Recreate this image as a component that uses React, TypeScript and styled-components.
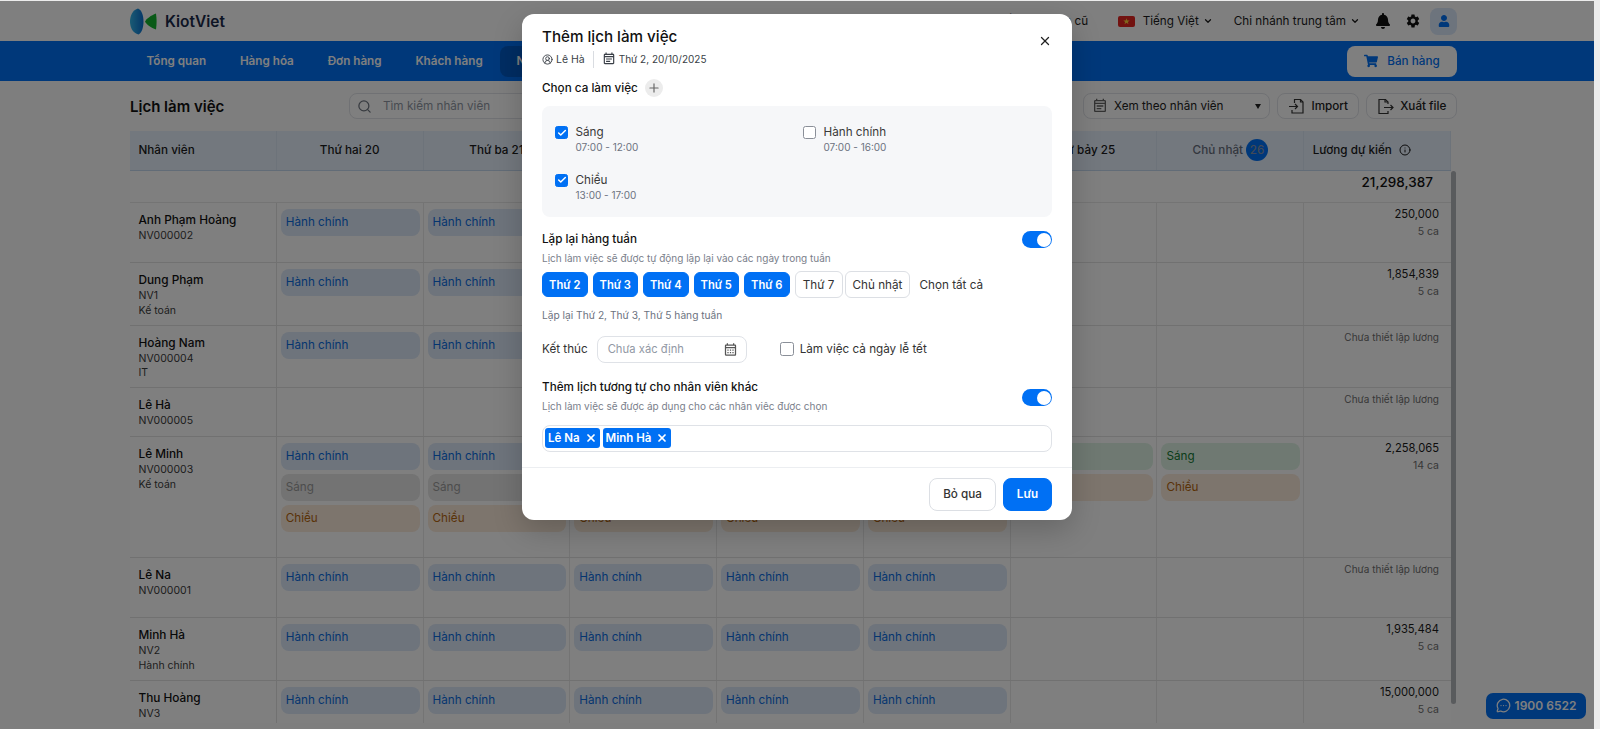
import React from "react";
import styled, { createGlobalStyle } from "styled-components";
import { Search, Info, MessageCircleMore, CircleUserRound, Plus, X, ChevronDown, Check } from "lucide-react";
import { FaBell, FaUser, FaShoppingCart } from "react-icons/fa";
import { MdSettings, MdOutlineEventNote, MdOutlineCalendarMonth } from "react-icons/md";

const Global = createGlobalStyle`
  html, body { margin: 0; padding: 0; height: 729px; overflow: hidden; background: #ececec; }
  body, button, input { font-family: Inter, "Noto Sans", sans-serif; }
  * { box-sizing: border-box; }
`;

const Viewport = styled.div`
  width: 1594px;
  height: 728px;
  margin-top: 1px;
  background: #fff;
  position: relative;
  overflow: hidden;
  display: flex;
  flex-direction: column;
`;

const TopBar = styled.header`
  height: 40px;
  flex: none;
  display: flex;
  align-items: center;
  padding: 0 137px 0 130px;
  background: #fff;
`;
const Brand = styled.div`
  display: flex;
  align-items: center;
  gap: 8px;
  font-size: 15.5px;
  font-weight: 600;
  color: #1b2a4a;
`;
const TopActions = styled.div`
  margin-left: auto;
  display: flex;
  align-items: center;
  font-size: 11.7px;
  color: #1c1c1c;
`;
const TopLink = styled.span<{ $mr: number }>`
  display: inline-flex;
  align-items: center;
  gap: 4px;
  margin-right: ${(p) => p.$mr}px;
  white-space: nowrap;
`;
const FlagSlot = styled.span`
  display: inline-flex;
  margin-right: 3.5px;
`;
const IconSlot = styled.span<{ $mr?: number }>`
  display: inline-flex;
  margin-right: ${(p) => p.$mr ?? 0}px;
  color: #111;
`;
const UserButton = styled.span`
  width: 27px;
  height: 27px;
  border-radius: 8px;
  background: #dbe8fa;
  color: #0070f4;
  display: inline-flex;
  align-items: center;
  justify-content: center;
`;

const NavBar = styled.nav`
  height: 40px;
  flex: none;
  display: flex;
  align-items: center;
  padding: 0 137px 0 129.6px;
  background: #0070f4;
`;
const NavItem = styled.span<{ $active?: boolean }>`
  height: 31px;
  display: inline-flex;
  align-items: center;
  padding: 0 16.9px;
  border-radius: 8px;
  font-size: 11.7px;
  font-weight: 600;
  color: #fff;
  background: ${(p) => (p.$active ? "#005bc7" : "transparent")};
`;
const SellButton = styled.span`
  margin-left: auto;
  width: 110px;
  height: 31px;
  border-radius: 8px;
  background: #fff;
  color: #0070f4;
  display: inline-flex;
  align-items: center;
  justify-content: center;
  gap: 9px;
  font-size: 11.7px;
  font-weight: 500;
`;

const Content = styled.main`
  flex: 1;
  min-height: 0;
  display: flex;
  flex-direction: column;
  padding: 12px 137px 0 130px;
  background: #fcfcfc;
`;
const TitleRow = styled.div`
  height: 26px;
  flex: none;
  display: flex;
  align-items: center;
  margin-bottom: 12px;
`;
const PageTitle = styled.h1`
  margin: 0;
  width: 219px;
  font-size: 15px;
  font-weight: 600;
  color: #111;
`;
const SearchBox = styled.div`
  width: 320px;
  height: 26px;
  border: 1px solid #e1e3e8;
  border-radius: 8px;
  background: #fff;
  display: flex;
  align-items: center;
  gap: 11px;
  padding: 0 7px;
  font-size: 11.7px;
  color: #9097a3;
`;
const ToolButton = styled.span<{ $w: number }>`
  width: ${(p) => p.$w}px;
  height: 26px;
  border: 1px solid #e1e3e8;
  border-radius: 8px;
  background: #fff;
  display: inline-flex;
  align-items: center;
  justify-content: center;
  gap: 6.5px;
  font-size: 11.7px;
  font-weight: 500;
  color: #222;
  margin-left: 7px;
`;
const ViewSelect = styled(ToolButton)`
  margin-left: auto;
  justify-content: flex-start;
  padding: 0 8px;
  font-weight: 400;
  color: #222;
  gap: 6px;
`;
const Caret = styled.span`
  margin-left: auto;
  width: 0;
  height: 0;
  border-left: 3.5px solid transparent;
  border-right: 3.5px solid transparent;
  border-top: 5px solid #222;
`;

const TableHead = styled.div`
  width: 1321px;
  height: 40px;
  flex: none;
  display: grid;
  grid-template-columns: repeat(9, 1fr);
  background: #e6f0fd;
  border-bottom: 1px solid #c5d8ef;
`;
const HeadCell = styled.div<{ $left?: boolean; $muted?: boolean }>`
  display: flex;
  align-items: center;
  justify-content: ${(p) => (p.$left ? "flex-start" : "center")};
  padding: 0 ${(p) => (p.$left ? "8.5px" : "0")} 2px;
  gap: 3px;
  font-size: 11.7px;
  font-weight: 500;
  color: ${(p) => (p.$muted ? "#666f7c" : "#1a1a1a")};
  border-right: 1px solid #dbe6f5;
  white-space: nowrap;
`;
const DayBadge = styled.span`
  width: 22px;
  height: 22px;
  border-radius: 50%;
  background: #0070f4;
  color: #8494ac;
  display: inline-flex;
  align-items: center;
  justify-content: center;
  font-size: 11.7px;
`;
const InfoSlot = styled.span`
  display: inline-flex;
  margin-left: 4px;
`;
const TableBody = styled.div`
  flex: 1;
  min-height: 0;
  display: flex;
  margin-bottom: 6px;
`;
const RowsClip = styled.div`
  width: 1321px;
  flex: none;
  overflow: hidden;
  background: #fff;
`;
const ScrollTrack = styled.div`
  width: 6px;
  flex: none;
  padding-right: 1px;
`;
const ScrollThumb = styled.div`
  height: 533px;
  border-radius: 3px;
  background: #b3b6bb;
`;
const TotalRow = styled.div`
  height: 32px;
  display: flex;
  justify-content: flex-end;
  padding: 2px 18px 0 0;
  font-size: 13.5px;
  font-weight: 500;
  line-height: 18px;
  color: #111;
  align-items: flex-start;
  border-bottom: 1px solid #e8e8e8;
`;
const Row = styled.div<{ $h: number }>`
  height: ${(p) => p.$h}px;
  display: grid;
  grid-template-columns: repeat(9, 1fr);
  border-bottom: 1px solid #e2e2e2;
`;
const Cell = styled.div`
  border-right: 1px solid #e8e8e8;
  padding: 6px 3px 0 4px;
  display: flex;
  flex-direction: column;
  gap: 4px;
  min-width: 0;
`;
const EmployeeCell = styled.div`
  border-right: 1px solid #e2e2e2;
  padding: 9px 8.5px 0;
  display: flex;
  flex-direction: column;
`;
const Name = styled.div`
  font-size: 11.8px;
  font-weight: 500;
  line-height: 17px;
  color: #111;
`;
const Sub = styled.div`
  font-size: 10.5px;
  line-height: 14.5px;
  color: #3c3c3c;
`;
const toneMap = {
  blue: ["#dce8f8", "#0b6be0"],
  grey: ["#e6e6e6", "#9a9a9a"],
  green: ["#def3e4", "#157a35"],
  orange: ["#fbeadb", "#b4660f"],
};
type Tone = keyof typeof toneMap;
const Chip = styled.div<{ $tone: Tone }>`
  height: 27px;
  flex: none;
  border-radius: 8px;
  background: ${(p) => toneMap[p.$tone][0]};
  color: ${(p) => toneMap[p.$tone][1]};
  font-size: 11.7px;
  line-height: 26px;
  padding-left: 5px;
`;
const SalaryCell = styled.div`
  padding: 3px 12px 0 0;
  text-align: right;
`;
const SalaryValue = styled.div`
  font-size: 11.2px;
  line-height: 16px;
  color: #1a1a1a;
`;
const SalaryShifts = styled.div`
  font-size: 10.5px;
  line-height: 19px;
  color: #6f6f6f;
`;
const NoSalary = styled.div`
  font-size: 10px;
  line-height: 14px;
  margin-top: 1px;
  color: #6f6f6f;
`;

const Hotline = styled.div`
  position: absolute;
  left: 1486px;
  top: 691.5px;
  width: 100px;
  height: 26px;
  border-radius: 7px;
  background: #0070f4;
  color: #fff;
  display: flex;
  align-items: center;
  justify-content: center;
  gap: 4px;
  font-size: 12px;
  font-weight: 600;
`;

const Overlay = styled.div`
  position: absolute;
  inset: 0;
  background: rgba(0, 0, 0, 0.5);
`;
const Modal = styled.section`
  position: absolute;
  left: 522px;
  top: 13px;
  width: 550px;
  height: 506px;
  background: #fff;
  border-radius: 12px;
  box-shadow: 0 10px 30px rgba(0, 0, 0, 0.2);
  display: flex;
  flex-direction: column;
`;
const ModalBody = styled.div`
  flex: 1;
  padding: 13px 20px 0;
  display: flex;
  flex-direction: column;
`;
const ModalHeadRow = styled.div`
  display: flex;
  justify-content: space-between;
`;
const ModalTitle = styled.h2`
  margin: 0;
  font-size: 15.2px;
  line-height: 20px;
  font-weight: 500;
  color: #111;
`;
const CloseButton = styled.span`
  display: inline-flex;
  margin-top: 7px;
  color: #222;
`;
const Meta = styled.div`
  display: flex;
  align-items: center;
  height: 18px;
  margin-top: 2px;
  font-size: 10.5px;
  color: #3a3f47;
`;
const MetaItem = styled.span`
  display: inline-flex;
  align-items: center;
  gap: 3px;
`;
const MetaDate = styled.span`
  font-size: 10px;
`;
const MetaDivider = styled.span`
  width: 1px;
  height: 17px;
  background: #d9dce1;
  margin: 0 8px;
`;
const SectionLabel = styled.div`
  display: flex;
  align-items: center;
  gap: 7px;
  height: 18px;
  margin-top: 11px;
  font-size: 11.7px;
  font-weight: 500;
  color: #111;
`;
const AddCircle = styled.span`
  width: 18px;
  height: 18px;
  border-radius: 50%;
  background: #ececec;
  color: #666;
  display: inline-flex;
  align-items: center;
  justify-content: center;
`;
const ShiftPanel = styled.div`
  margin-top: 9px;
  height: 111px;
  border-radius: 8px;
  background: #f6f7f9;
  padding: 18px 13px 0;
  display: grid;
  grid-template-columns: 248px 1fr;
  grid-auto-rows: 47.5px;
`;
const ShiftOption = styled.div`
  display: flex;
  gap: 7.5px;
`;
const Box = styled.span<{ $on?: boolean }>`
  width: 13px;
  height: 13px;
  margin-top: 2px;
  flex: none;
  border-radius: 2.5px;
  border: 1px solid ${(p) => (p.$on ? "#0070f4" : "#8a8f98")};
  background: ${(p) => (p.$on ? "#0070f4" : "#fff")};
  color: #fff;
  display: inline-flex;
  align-items: center;
  justify-content: center;
`;
const ShiftName = styled.div`
  font-size: 11.7px;
  line-height: 16px;
  color: #3a3a3a;
`;
const ShiftTime = styled.div`
  font-size: 10px;
  line-height: 14px;
  color: #6c7280;
`;
const SwitchRow = styled.div<{ $mt: number }>`
  margin-top: ${(p) => p.$mt}px;
  display: flex;
  justify-content: space-between;
  align-items: flex-start;
`;
const Strong = styled.div`
  font-size: 11.7px;
  line-height: 16px;
  font-weight: 500;
  color: #111;
`;
const Hint = styled.div`
  margin-top: 4px;
  font-size: 10px;
  line-height: 14px;
  color: #7a808b;
`;
const Toggle = styled.span<{ $mt: number }>`
  width: 30px;
  height: 17px;
  margin-top: ${(p) => p.$mt}px;
  border-radius: 9px;
  background: #0070f4;
  display: flex;
  justify-content: flex-end;
  align-items: center;
  padding: 0 1.5px;
  &::after {
    content: "";
    width: 14px;
    height: 14px;
    border-radius: 50%;
    background: #fff;
  }
`;
const DayRow = styled.div`
  display: flex;
  align-items: center;
  margin-top: 6px;
  height: 27px;
`;
const Day = styled.span<{ $on?: boolean; $w: number }>`
  width: ${(p) => p.$w}px;
  height: ${(p) => (p.$on ? 25 : 27)}px;
  margin-right: ${(p) => (p.$on ? 5 : 2.5)}px;
  border-radius: 6px;
  border: 1px solid ${(p) => (p.$on ? "#0070f4" : "#dcdfe4")};
  background: ${(p) => (p.$on ? "#0070f4" : "#fff")};
  color: ${(p) => (p.$on ? "#fff" : "#333")};
  font-size: ${(p) => (p.$on ? 11.2 : 11.7)}px;
  font-weight: ${(p) => (p.$on ? 600 : 400)};
  display: inline-flex;
  align-items: center;
  justify-content: center;
  white-space: nowrap;
`;
const SelectAll = styled.span`
  margin-left: 7px;
  font-size: 11.7px;
  color: #333;
`;
const RepeatNote = styled.div`
  margin-top: 10px;
  font-size: 10.2px;
  line-height: 14px;
  color: #6c7280;
`;
const EndRow = styled.div`
  display: flex;
  align-items: center;
  margin-top: 13.5px;
  height: 27px;
  font-size: 11.7px;
  color: #333;
`;
const DateInput = styled.div`
  width: 150px;
  height: 27px;
  margin: 0 33px 0 9px;
  border: 1px solid #dfe2e7;
  border-radius: 8px;
  display: flex;
  align-items: center;
  justify-content: space-between;
  padding: 0 8px 0 10px;
  font-size: 11.2px;
  color: #9299a5;
`;
const PlainBox = styled(Box)`
  margin: 0 6px 0 0;
  width: 14px;
  height: 14px;
`;
const TagInput = styled.div`
  margin-top: 11.500px;
  height: 27px;
  border: 1px solid #dfe2e7;
  border-radius: 8px;
  display: flex;
  align-items: center;
  gap: 3px;
  padding: 0 2px;
`;
const Tag = styled.span`
  height: 20px;
  border-radius: 3px;
  background: #0070f4;
  color: #fff;
  display: inline-flex;
  align-items: center;
  gap: 5px;
  padding: 0 3px;
  font-size: 11.5px;
  font-weight: 600;
`;
const ModalFooter = styled.footer`
  height: 53.500px;
  flex: none;
  border-top: 1px solid #eceef1;
  display: flex;
  justify-content: flex-end;
  gap: 7px;
  padding: 10px 20px 0;
`;
const FooterButton = styled.span<{ $primary?: boolean }>`
  width: ${(p) => (p.$primary ? 49 : 67)}px;
  height: 33px;
  border-radius: 8px;
  border: 1px solid ${(p) => (p.$primary ? "#0070f4" : "#dcdfe4")};
  background: ${(p) => (p.$primary ? "#0070f4" : "#fff")};
  color: ${(p) => (p.$primary ? "#fff" : "#333")};
  font-size: 11.7px;
  font-weight: ${(p) => (p.$primary ? 600 : 500)};
  display: inline-flex;
  align-items: center;
  justify-content: center;
`;

const Logo = () => (
  <svg width="27" height="27" viewBox="0 0 27 27">
    <defs>
      <linearGradient id="lg" x1="0" x2="1" y1="0" y2="0">
        <stop offset="0" stopColor="#35b6e8" />
        <stop offset="1" stopColor="#0a6fd0" />
      </linearGradient>
    </defs>
    <path d="M8 .5C3 2 0 7 0 13.500S3 25 8.500 26.500C11.500 25 13.500 20 13.500 13.500S11.500 2 8 .500Z" fill="url(#lg)" />
    <path d="M26 5.500C21 7.500 16.500 10.500 15 13.500C16.500 16.500 21 20 26 21.500C26.800 16 26.800 11 26 5.500Z" fill="#12b52e" />
  </svg>
);
const Flag = () => (
  <svg width="17" height="11" viewBox="0 0 17 11">
    <rect width="17" height="11" rx="2" fill="#e52421" />
    <path d="M8.500 2.200l.8 2.300h2.400l-1.900 1.400.7 2.300-2-1.400-2 1.400.7-2.300-1.900-1.400h2.400z" fill="#ffd43b" />
  </svg>
);
const ImportIcon = () => (
  <svg width="17" height="17" viewBox="0 0 17 17" fill="none" stroke="#333" strokeWidth="1.2">
    <path d="M6.500 5V1.500h6l2.500 2.500v11H4V12" />
    <path d="M12.500 1.500V4H15" />
    <path d="M1 8.500h8M7 6l2.500 2.500L7 11" />
  </svg>
);
const ExportIcon = () => (
  <svg width="17" height="17" viewBox="0 0 17 17" fill="none" stroke="#333" strokeWidth="1.2">
    <path d="M11 6V4L8.500 1.500H2v14h9V13" />
    <path d="M8 1.500V4h3" />
    <path d="M7 9.500h9M13.500 7l2.500 2.500L13.500 12" />
  </svg>
);

type RowData = {
  h: number;
  name: string;
  sub: string[];
  dayLabels: string[][];
  salary?: string;
  shifts?: string;
};
const hc: string[] = ["Hành chính"];
const five = Array.from({ length: 5 }, () => hc);
const mixed = ["Hành chính", "Sáng*", "Chiều"];
const rows: RowData[] = [
  { h: 60, name: "Anh Phạm Hoàng", sub: ["NV000002"], dayLabels: five, salary: "250,000", shifts: "5 ca" },
  { h: 62.5, name: "Dung Phạm", sub: ["NV1", "Kế toán"], dayLabels: five, salary: "1,854,839", shifts: "5 ca" },
  { h: 62.5, name: "Hoàng Nam", sub: ["NV000004", "IT"], dayLabels: five },
  { h: 49, name: "Lê Hà", sub: ["NV000005"], dayLabels: [] },
  {
    h: 121,
    name: "Lê Minh",
    sub: ["NV000003", "Kế toán"],
    dayLabels: [mixed, mixed, mixed, mixed, mixed, ["Sáng", "Chiều"], ["Sáng", "Chiều"]],
    salary: "2,258,065",
    shifts: "14 ca",
  },
  { h: 60, name: "Lê Na", sub: ["NV000001"], dayLabels: five },
  { h: 63, name: "Minh Hà", sub: ["NV2", "Hành chính"], dayLabels: five, salary: "1,935,484", shifts: "5 ca" },
  { h: 63, name: "Thu Hoàng", sub: ["NV3"], dayLabels: five, salary: "15,000,000", shifts: "5 ca" },
];
const chipInfo = (label: string): { text: string; tone: Tone } => {
  if (label === "Hành chính") return { text: label, tone: "blue" };
  if (label === "Sáng*") return { text: "Sáng", tone: "grey" };
  if (label === "Sáng") return { text: label, tone: "green" };
  return { text: label, tone: "orange" };
};
const headers = ["Thứ hai 20", "Thứ ba 21", "Thứ tư 22", "Thứ năm 23", "Thứ sáu 24", "Thứ bảy 25"];

export default function App() {
  return (
    <>
      <Global />
      <Viewport>
        <TopBar>
          <Brand>
            <Logo />
            KiotViet
          </Brand>
          <TopActions>
            <TopLink $mr={30}>Về phiên bản cũ</TopLink>
            <TopLink $mr={21}>
              <FlagSlot>
                <Flag />
              </FlagSlot>
              <span>Tiếng Việt</span>
              <ChevronDown size={10} strokeWidth={3} />
            </TopLink>
            <TopLink $mr={15}>
              <span>Chi nhánh trung tâm</span>
              <ChevronDown size={10} strokeWidth={3} />
            </TopLink>
            <IconSlot $mr={14}>
              <FaBell size={16} />
            </IconSlot>
            <IconSlot $mr={9}>
              <MdSettings size={16} />
            </IconSlot>
            <UserButton>
              <FaUser size={12} />
            </UserButton>
          </TopActions>
        </TopBar>
        <NavBar>
          <NavItem>Tổng quan</NavItem>
          <NavItem>Hàng hóa</NavItem>
          <NavItem>Đơn hàng</NavItem>
          <NavItem>Khách hàng</NavItem>
          <NavItem $active>Nhân viên</NavItem>
          <SellButton>
            <FaShoppingCart size={14} />
            Bán hàng
          </SellButton>
        </NavBar>
        <Content>
          <TitleRow>
            <PageTitle>Lịch làm việc</PageTitle>
            <SearchBox>
              <Search size={15} color="#6f7680" />
              Tìm kiếm nhân viên
            </SearchBox>
            <ViewSelect $w={187}>
              <MdOutlineEventNote size={16} color="#666" />
              Xem theo nhân viên
              <Caret />
            </ViewSelect>
            <ToolButton $w={82}>
              <ImportIcon />
              Import
            </ToolButton>
            <ToolButton $w={91}>
              <ExportIcon />
              Xuất file
            </ToolButton>
          </TitleRow>
          <TableHead>
            <HeadCell $left>Nhân viên</HeadCell>
            {headers.map((h) => (
              <HeadCell key={h}>{h}</HeadCell>
            ))}
            <HeadCell $muted>
              Chủ nhật <DayBadge>26</DayBadge>
            </HeadCell>
            <HeadCell $left>
              Lương dự kiến
              <InfoSlot>
                <Info size={12} />
              </InfoSlot>
            </HeadCell>
          </TableHead>
          <TableBody>
            <RowsClip>
              <TotalRow>21,298,387</TotalRow>
              {rows.map((r) => (
                <Row key={r.name} $h={r.h}>
                  <EmployeeCell>
                    <Name>{r.name}</Name>
                    {r.sub.map((s) => (
                      <Sub key={s}>{s}</Sub>
                    ))}
                  </EmployeeCell>
                  {Array.from({ length: 7 }, (_, i) => (
                    <Cell key={i}>
                      {(r.dayLabels[i] ?? []).map((l) => {
                        const c = chipInfo(l);
                        return (
                          <Chip key={l} $tone={c.tone}>
                            {c.text}
                          </Chip>
                        );
                      })}
                    </Cell>
                  ))}
                  <SalaryCell>
                    {r.salary ? (
                      <>
                        <SalaryValue>{r.salary}</SalaryValue>
                        <SalaryShifts>{r.shifts}</SalaryShifts>
                      </>
                    ) : (
                      <NoSalary>Chưa thiết lập lương</NoSalary>
                    )}
                  </SalaryCell>
                </Row>
              ))}
            </RowsClip>
            <ScrollTrack>
              <ScrollThumb />
            </ScrollTrack>
          </TableBody>
        </Content>
        <Hotline>
          <MessageCircleMore size={15} />
          1900 6522
        </Hotline>
        <Overlay />
        <Modal>
          <ModalBody>
            <ModalHeadRow>
              <ModalTitle>Thêm lịch làm việc</ModalTitle>
              <CloseButton>
                <X size={14} strokeWidth={2.2} />
              </CloseButton>
            </ModalHeadRow>
            <Meta>
              <MetaItem>
                <CircleUserRound size={11} />
                Lê Hà
              </MetaItem>
              <MetaDivider />
              <MetaItem>
                <MdOutlineEventNote size={14} />
                <MetaDate>Thứ 2, 20/10/2025</MetaDate>
              </MetaItem>
            </Meta>
            <SectionLabel>
              Chọn ca làm việc
              <AddCircle>
                <Plus size={14} />
              </AddCircle>
            </SectionLabel>
            <ShiftPanel>
              <ShiftOption>
                <Box $on>
                  <Check size={10} strokeWidth={3.5} />
                </Box>
                <div>
                  <ShiftName>Sáng</ShiftName>
                  <ShiftTime>07:00 - 12:00</ShiftTime>
                </div>
              </ShiftOption>
              <ShiftOption>
                <Box />
                <div>
                  <ShiftName>Hành chính</ShiftName>
                  <ShiftTime>07:00 - 16:00</ShiftTime>
                </div>
              </ShiftOption>
              <ShiftOption>
                <Box $on>
                  <Check size={10} strokeWidth={3.5} />
                </Box>
                <div>
                  <ShiftName>Chiều</ShiftName>
                  <ShiftTime>13:00 - 17:00</ShiftTime>
                </div>
              </ShiftOption>
            </ShiftPanel>
            <SwitchRow $mt={14}>
              <div>
                <Strong>Lặp lại hàng tuần</Strong>
                <Hint>Lịch làm việc sẽ được tự động lặp lại vào các ngày trong tuần</Hint>
              </div>
              <Toggle $mt={0} />
            </SwitchRow>
            <DayRow>
              <Day $on $w={45.5}>Thứ 2</Day>
              <Day $on $w={45.5}>Thứ 3</Day>
              <Day $on $w={45.5}>Thứ 4</Day>
              <Day $on $w={45.5}>Thứ 5</Day>
              <Day $on $w={45.5}>Thứ 6</Day>
              <Day $w={48}>Thứ 7</Day>
              <Day $w={65}>Chủ nhật</Day>
              <SelectAll>Chọn tất cả</SelectAll>
            </DayRow>
            <RepeatNote>Lặp lại Thứ 2, Thứ 3, Thứ 5 hàng tuần</RepeatNote>
            <EndRow>
              Kết thúc
              <DateInput>
                Chưa xác định
                <MdOutlineCalendarMonth size={15} color="#555" />
              </DateInput>
              <PlainBox />
              Làm việc cả ngày lễ tết
            </EndRow>
            <SwitchRow $mt={16.5}>
              <div>
                <Strong>Thêm lịch tương tự cho nhân viên khác</Strong>
                <Hint>Lịch làm việc sẽ được áp dụng cho các nhân viêc được chọn</Hint>
              </div>
              <Toggle $mt={10} />
            </SwitchRow>
            <TagInput>
              <Tag>
                Lê Na
                <X size={12} strokeWidth={3.5} />
              </Tag>
              <Tag>
                Minh Hà
                <X size={12} strokeWidth={3.5} />
              </Tag>
            </TagInput>
          </ModalBody>
          <ModalFooter>
            <FooterButton>Bỏ qua</FooterButton>
            <FooterButton $primary>Lưu</FooterButton>
          </ModalFooter>
        </Modal>
      </Viewport>
    </>
  );
}
